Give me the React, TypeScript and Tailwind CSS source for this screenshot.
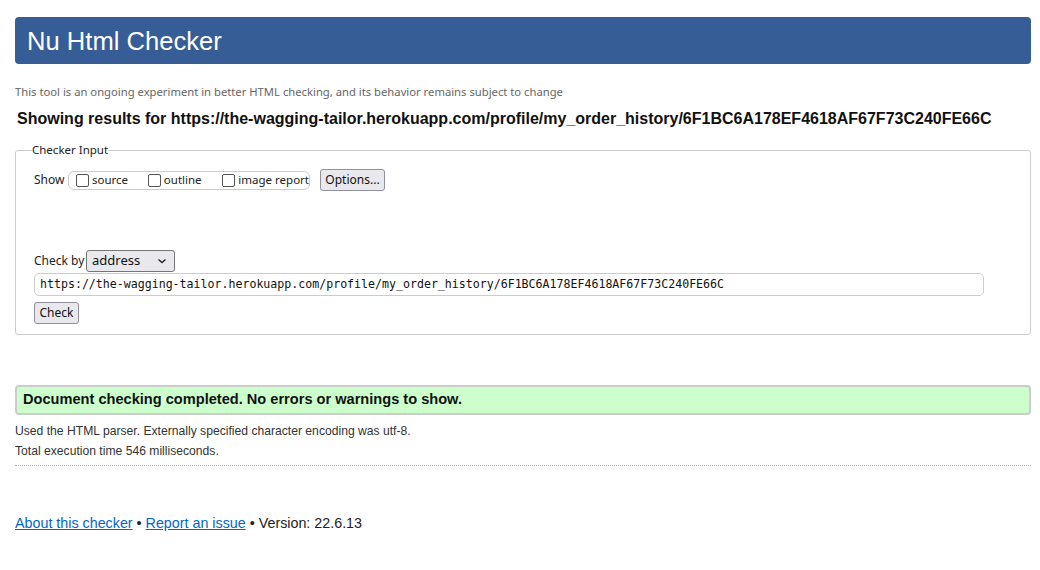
import React from "react";

const ui = { fontFamily: '"Noto Sans", "Open Sans", sans-serif' };
const arial = { fontFamily: '"Liberation Sans", Arial, sans-serif' };
const mono = { fontFamily: '"DejaVu Sans Mono", "Liberation Mono", monospace' };

function Box({ label }: { label: string }) {
  return (
    <span className="flex items-center gap-[3px] whitespace-nowrap">
      <span className="inline-block w-[13px] h-[13px] border border-[#555] rounded-[2px] bg-white" />
      <span className="text-[11.5px] text-[#222]">{label}</span>
    </span>
  );
}

export default function App() {
  const url =
    "https://the-wagging-tailor.herokuapp.com/profile/my_order_history/6F1BC6A178EF4618AF67F73C240FE66C";
  return (
    <div className="w-[1040px] h-[570px] bg-white pl-[15px] pr-[9px] pt-[17px] text-[#222]" style={arial}>
      <div className="h-[47px] bg-[#365d95] rounded-[4px] flex items-center px-[12px]">
        <h1 className="text-white text-[25.6px] leading-none translate-y-[1px]">Nu Html Checker</h1>
      </div>
      <p className="mt-[20px] text-[11.25px] text-[#666] leading-[16px] whitespace-nowrap" style={ui}>
        This tool is an ongoing experiment in better HTML checking, and its behavior remains subject to change
      </p>
      <h2 className="mt-[9px] ml-[2px] text-[16px] font-bold leading-[20px] text-[#111]">
        Showing results for {url}
      </h2>
      <fieldset
        className="mt-[14px] border border-[#ccc] rounded-[3px] px-[18px] h-[192px]"
        style={ui}
      >
        <legend className="ml-[-2px] px-0 text-[11.5px] leading-[14px] text-[#222]">Checker Input</legend>
        <div className="flex items-center mt-[12px] text-[11.5px]">
          <span className="w-[33px] shrink-0 whitespace-nowrap text-[12px]">Show</span>
          <div className="ml-[1px] flex items-center border border-[#ccc] rounded-[6px] h-[19px] pl-[7px] w-[242px]">
            <Box label="source" />
            <span className="w-[20px]" />
            <Box label="outline" />
            <span className="w-[21px]" />
            <Box label="image report" />
          </div>
          <button className="ml-[10px] h-[22px] w-[65px] border border-[#8f8f9d] bg-[#e9e9ed] rounded-[3px] text-[12px] text-[#111]">
            Options...
          </button>
        </div>
        <div className="flex items-center mt-[59px] text-[11.5px]">
          <span className="w-[50px] shrink-0 whitespace-nowrap text-[12px]">Check by</span>
          <div className="ml-[2px] w-[89px] h-[22px] border border-[#767676] bg-[#e9e9ed] rounded-[3px] flex items-center justify-between pl-[5px] pr-[7px]">
            <span className="text-[13px] text-[#111]">address</span>
            <svg width="10" height="6" viewBox="0 0 10 6" fill="none">
              <path d="M1.5 1.5 L5 4.5 L8.5 1.5" stroke="#222" strokeWidth="1.4" />
            </svg>
          </div>
        </div>
        <div
          className="mt-[1px] w-[950px] h-[23px] border border-[#ccc] rounded-[5px] flex items-center px-[5px] text-[11.6px] text-[#111]"
          style={mono}
        >
          {url}
        </div>
        <button className="mt-[6px] h-[22px] w-[45px] border border-[#8f8f9d] bg-[#e9e9ed] rounded-[3px] text-[12px] text-[#111]">
          Check
        </button>
      </fieldset>
      <div className="mt-[49.5px] h-[30px] bg-[#ccffcc] border-2 border-[#ccc] rounded-[4px] flex items-center px-[6px]">
        <span className="text-[14.6px] font-bold text-[#111] whitespace-nowrap">
          Document checking completed. No errors or warnings to show.
        </span>
      </div>
      <p className="mt-[8px] text-[12.15px] leading-[16px] text-[#333]">
        Used the HTML parser. Externally specified character encoding was utf-8.
      </p>
      <p className="mt-[4px] text-[12.15px] leading-[16px] text-[#333]">Total execution time 546 milliseconds.</p>
      <div className="mt-[6px] border-b border-dotted border-[#aaa]" />
      <p className="mt-[48.5px] text-[14.3px] leading-[18px] text-[#222]">
        <a href="#" className="text-[#0066cc] underline">About this checker</a> •{" "}
        <a href="#" className="text-[#0066cc] underline">Report an issue</a> • Version: 22.6.13
      </p>
    </div>
  );
}
